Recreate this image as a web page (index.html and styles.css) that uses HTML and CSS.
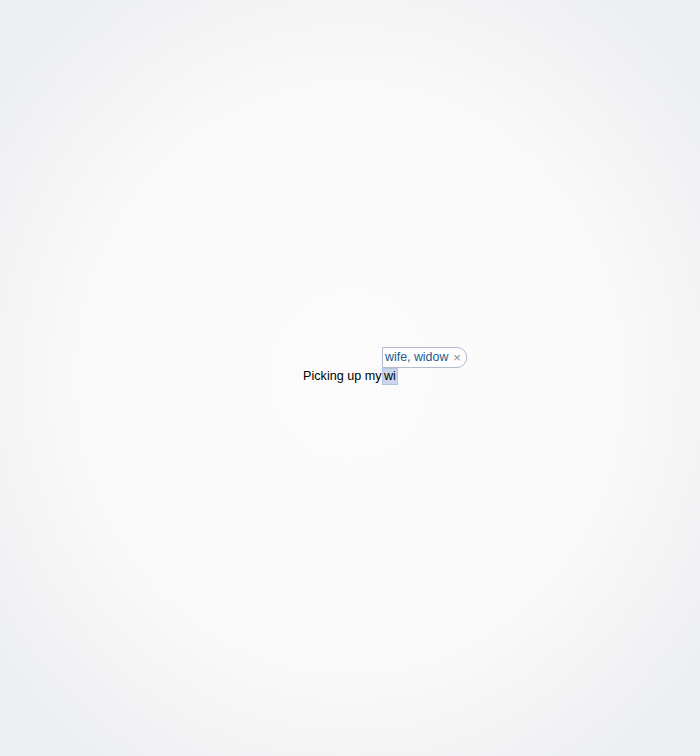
FILE: index.html
```html
<!DOCTYPE html>
<html>
<head>
<meta charset="utf-8">
<link rel="stylesheet" href="styles.css">
</head>
<body>
<div class="stage">
  <p class="line">Picking up my <span class="word">wi<span class="bubble"><span class="sugg">wife, widow</span><span class="close">×</span></span></span></p>
</div>
</body>
</html>
```
FILE: styles.css
```css
html, body {
  margin: 0;
  padding: 0;
  height: 100%;
}
body {
  background: radial-gradient(ellipse 62% 62% at 50% 50%, #fbfbfb 0%, #fafafa 60%, #eeeff1 100%);
  font-family: "Liberation Sans", Arial, sans-serif;
}
.stage {
  height: 756px;
  display: flex;
  align-items: center;
  justify-content: center;
  padding-left: 1px;
  box-sizing: border-box;
}
.line {
  margin: 0;
  font-size: 12.6px;
  line-height: 17px;
  color: #000;
  position: relative;
  top: -2px;
}
.word {
  position: relative;
  display: inline-block;
  background: #cbd6ec;
  box-shadow: inset 0 0 0 1px #b3c3e0;
  padding: 0 2px;
  margin-left: -3px;
}
.bubble {
  position: absolute;
  left: 0;
  bottom: 100%;
  display: flex;
  align-items: center;
  gap: 5px;
  height: 19px;
  padding: 0 5px 0 2px;
  border: 1px solid #b2bccb;
  border-radius: 0 10px 10px 0;
  background: #fdfdfd;
  white-space: nowrap;
}
.sugg {
  color: #215c8e;
  font-size: 12.4px;
}
.close {
  color: #8a8f96;
  font-size: 13px;
  line-height: 1;
}
```
